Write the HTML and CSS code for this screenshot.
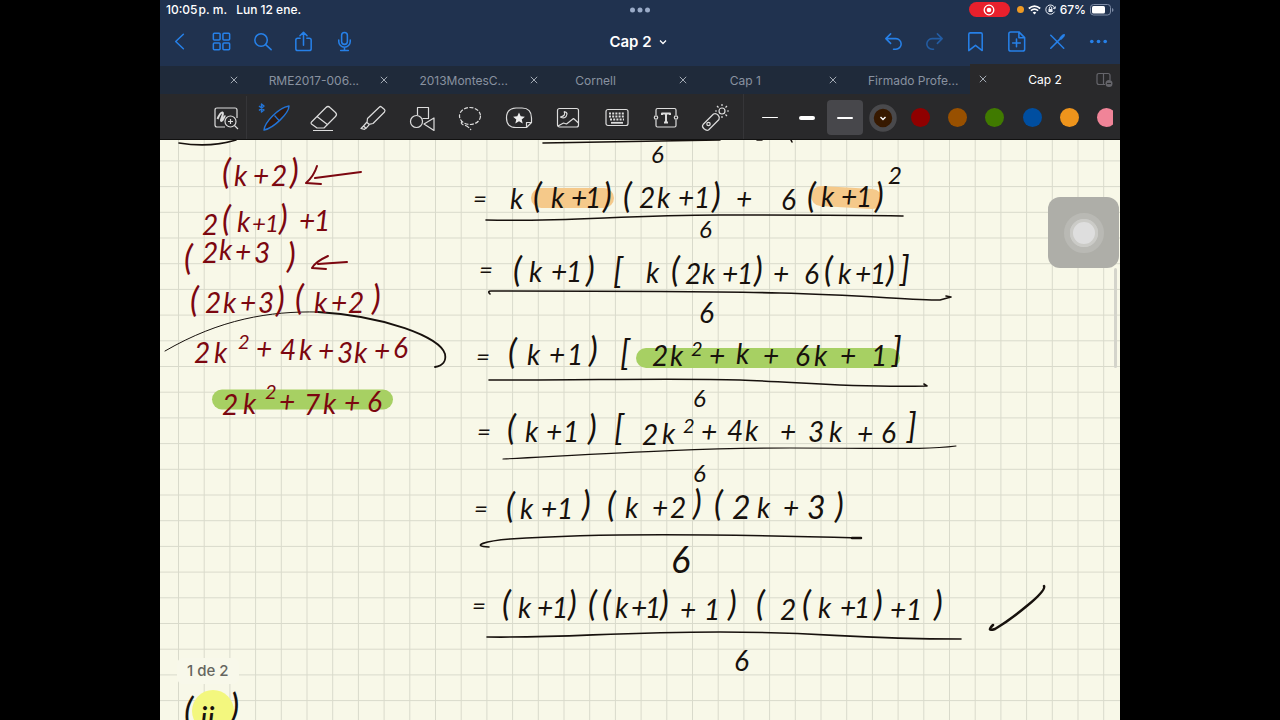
FILE: index.html
```html
<!DOCTYPE html>
<html lang="es">
<head>
<meta charset="utf-8">
<meta name="viewport" content="width=device-width, initial-scale=1">
<title>Cap 2</title>
<link rel="stylesheet" href="styles.css">
</head>
<body>
<svg width="0" height="0" class="symbols" aria-hidden="true"><symbol id="cross" viewBox="0 0 8 8"><path d="M.8.8l6.400 6.400M7.200.8L.8 7.200" fill="none" stroke="#a2a9b3" stroke-width="1"/></symbol></svg>
<div class="tablet">
  <header class="header">
    <div class="status">
      <div class="status-left"><span>10:05&#8202;p.&nbsp;m.</span><span>Lun 12 ene.</span></div>
      <svg class="dots" width="22" height="6" viewBox="0 0 22 6" aria-hidden="true"><circle cx="3.500" cy="3" r="2.500"/><circle cx="11" cy="3" r="2.500"/><circle cx="18.500" cy="3" r="2.500"/></svg>
      <div class="status-right">
        <span class="recording"><svg width="12" height="12" viewBox="0 0 12 12"><circle cx="6" cy="6" r="4.800" fill="none" stroke="#fff" stroke-width="1.300"/><circle cx="6" cy="6" r="2.300" fill="#fff"/></svg></span>
        <span class="mic-dot"></span>
        <svg width="13" height="10" viewBox="0 0 13 10" fill="none" stroke="#fff" stroke-width="1.700"><path d="M.8 3.500Q6.500-1.200 12.200 3.500M2.900 5.700Q6.500 2.700 10.100 5.700"/><path d="M4.700 7.500Q6.500 6.200 8.300 7.500L6.500 9.400Z" fill="#fff" stroke="none"/></svg>
        <svg width="11" height="11" viewBox="0 0 11 11" fill="none" stroke="#e8ecf4" stroke-width="1"><path d="M9.800 4.200A4.600 4.600 0 1 0 9.500 7.700M10.500 2.500l-.6 2.400-2-.9"/><rect x="3.500" y="5" width="4" height="3" fill="#e8ecf4" stroke="none"/><path d="M4.300 5V3.900a1.200 1.200 0 0 1 2.400 0V5"/></svg>
        <span>67%</span>
        <svg width="24" height="12" viewBox="0 0 24 12"><rect x=".5" y=".5" width="20" height="10.500" rx="3" fill="none" stroke="#7d8ba5"/><rect x="2" y="2" width="13" height="7.500" rx="1.500" fill="#fff"/><path d="M22 4v4q1.500-.6 1.500-2T22 4" fill="#7d8ba5"/></svg>
      </div>
    </div>
    <div class="nav">
      <div class="nav-group">
        <button class="nav-button" aria-label="Atrás"><svg width="24" height="24" viewBox="0 0 24 24"><path d="M15 4.500L7 12l8 7.500"/></svg></button>
        <button class="nav-button" aria-label="Miniaturas"><svg width="24" height="24" viewBox="0 0 24 24"><rect x="3.500" y="3.500" width="7" height="7" rx="1"/><rect x="13.500" y="3.500" width="7" height="7" rx="1"/><rect x="3.500" y="13.500" width="7" height="7" rx="1"/><rect x="13.500" y="13.500" width="7" height="7" rx="1"/></svg></button>
        <button class="nav-button" aria-label="Buscar"><svg width="24" height="24" viewBox="0 0 24 24"><circle cx="10.500" cy="10.500" r="6.500"/><path d="M15.300 15.300l5.700 5.200"/></svg></button>
        <button class="nav-button" aria-label="Compartir"><svg width="24" height="24" viewBox="0 0 24 24"><path d="M8.500 8.500H6q-2 0-2 2v9q0 2 2 2h12q2 0 2-2v-9q0-2-2-2h-2.500M12 16V2.500M8.300 6L12 2.300 15.700 6"/></svg></button>
        <button class="nav-button" aria-label="Grabar audio"><svg width="24" height="24" viewBox="0 0 24 24"><rect x="9" y="2.500" width="6" height="12.500" rx="3"/><path d="M6 10.500v1.500a6 6 0 0 0 12 0v-1.500M12 18v3.500M8 21.500h8"/></svg></button>
      </div>
      <button class="title">Cap 2 <svg width="8" height="6" viewBox="0 0 8 6" fill="none" stroke="#fff" stroke-width="1.300"><path d="M1 1.500l3 3 3-3"/></svg></button>
      <div class="nav-group">
        <button class="nav-button" aria-label="Deshacer"><svg width="24" height="24" viewBox="0 0 24 24"><path d="M9 4L4 9l5 5M4 9h10.500a5.300 5.300 0 0 1 0 11H12"/></svg></button>
        <button class="nav-button dim" aria-label="Rehacer" disabled><svg width="24" height="24" viewBox="0 0 24 24"><path d="M15 4l5 5-5 5M20 9H9.500a5.300 5.300 0 0 0 0 11H11"/></svg></button>
        <button class="nav-button" aria-label="Marcador"><svg width="24" height="24" viewBox="0 0 24 24"><path d="M5 4.500q0-1.500 1.500-1.500h11q1.500 0 1.500 1.500V21.500L12 16 5 21.500Z"/></svg></button>
        <button class="nav-button" aria-label="Añadir página"><svg width="24" height="24" viewBox="0 0 24 24"><path d="M14.500 2H6q-2 0-2 2v16q0 2 2 2h12.500q2 0 2-2V8ZM14.500 2v6h6M12 9.500v8M8 13.500h8"/></svg></button>
        <button class="nav-button" aria-label="Modo lectura"><svg width="24" height="24" viewBox="0 0 24 24"><path d="M5 5.500L18.500 19M5 19L14.500 9.500M16 8l3-3" /><path d="M15.500 8.500l2.500-2.500" stroke-width="3"/></svg></button>
        <button class="nav-button" aria-label="Más"><svg width="24" height="24" viewBox="0 0 24 24"><g fill="#2680e8" stroke="none"><circle cx="5" cy="12" r="1.900"/><circle cx="12" cy="12" r="1.900"/><circle cx="19" cy="12" r="1.900"/></g></svg></button>
      </div>
    </div>
    <nav class="tabs">
      <span></span>
      <div class="tab long"><button class="close" aria-label="Cerrar"><svg width="8" height="8"><use href="#cross"/></svg></button><span>RME2017-006...</span></div>
      <div class="tab long"><button class="close" aria-label="Cerrar"><svg width="8" height="8"><use href="#cross"/></svg></button><span>2013MontesC...</span></div>
      <div class="tab"><button class="close" aria-label="Cerrar"><svg width="8" height="8"><use href="#cross"/></svg></button><span>Cornell</span></div>
      <div class="tab"><button class="close" aria-label="Cerrar"><svg width="8" height="8"><use href="#cross"/></svg></button><span>Cap 1</span></div>
      <div class="tab long"><button class="close" aria-label="Cerrar"><svg width="8" height="8"><use href="#cross"/></svg></button><span>Firmado Profe...</span></div>
      <div class="tab active"><button class="close" aria-label="Cerrar"><svg width="8" height="8"><use href="#cross"/></svg></button><span>Cap 2</span>
        <button class="split" aria-label="Vista dividida"><svg width="17" height="15" viewBox="0 0 17 15" fill="none" stroke="#65656b" stroke-width="1.200"><path d="M9 12.500H3q-2 0-2-2v-7q0-2 2-2h9q2 0 2 2V8M7.500 1.500v11"/><circle cx="13" cy="11.500" r="3.500" fill="#65656b" stroke="none"/><path d="M11 11.500h4" stroke="#29292b"/></svg></button>
      </div>
    </nav>
  </header>

  <div class="toolbar">
    <div class="tools">
      <button class="tool" aria-label="Ventana de zoom"><svg width="28" height="28" viewBox="0 0 28 28"><path d="M13 23H5q-2 0-2-2V6q0-2 2-2h18q2 0 2 2v8"/><path d="M5.500 15q3-7 5-6.500c2 .5-3 8.500-1 8.500s2-5 4-5" stroke-width="2"/><circle cx="18.500" cy="17.500" r="5.500"/><path d="M22.500 21.500l3.500 3.500M16 17.500h5M18.500 15v5"/></svg></button>
      <button class="tool pen" aria-label="Pluma"><svg width="38" height="30" viewBox="0 0 38 30"><path d="M4 3l5 4-2.500 2V1L9 3 4 7.500" stroke="#2374d6" stroke-width="1.500"/><path d="M9 27C10 19 23 5 34 3 34 10 19 25 9 27Z" fill="#2c1a14" stroke="#2374d6" stroke-width="1.400"/><path d="M19.500 12.500l4.500 5" stroke="#2374d6"/></svg></button>
      <button class="tool" aria-label="Borrador"><svg width="30" height="28" viewBox="0 0 30 28"><path d="M2.500 18L17 3.500q2-2 4 0l5.500 5q2 2 0 4L15 24H8l-5.500-4q-1-1 0-2M8 12.500l11 8.500M4 26.500h20"/></svg></button>
      <button class="tool" aria-label="Resaltador"><svg width="28" height="28" viewBox="0 0 28 28"><path d="M8.500 14.500L20.500 3q1-1 2 0l3 2.500q1 1 0 2.500L14 19.500l-4 .8-2-1.800ZM8 18l-3.500 4 2.500 2.300 3.500-4M4.500 22L2 24.500l3.500.8L7 24"/></svg></button>
      <button class="tool" aria-label="Formas"><svg width="28" height="28" viewBox="0 0 28 28"><path d="M9.500 11V3.500h11v11h-6"/><circle cx="8.500" cy="17.500" r="6"/><path d="M26 14v12.500L16 20Z"/></svg></button>
      <button class="tool" aria-label="Lazo"><svg width="28" height="28" viewBox="0 0 28 28"><ellipse cx="14" cy="12" rx="10.500" ry="8.500" stroke-dasharray="4 1.500"/><path d="M6 17q-2 3 2 4t7 5" stroke-dasharray="5 1.500"/></svg></button>
      <button class="tool" aria-label="Elementos"><svg width="30" height="28" viewBox="0 0 30 28"><path d="M22.500 23.500H12q-9.500 0-9.500-9.500T12 4h6q9.500 0 9.500 10v4.500ZM22.500 23.500v-5h5"/><path d="M15 8.500l1.700 3.800 4.200.4-3.200 2.700 1 4-3.700-2.100-3.700 2.100 1-4-3.200-2.700 4.200-.4Z" fill="#eee" stroke="none"/></svg></button>
      <button class="tool" aria-label="Imagen"><svg width="28" height="28" viewBox="0 0 28 28"><rect x="3.500" y="4.500" width="21" height="18.500" rx="2"/><path d="M4 22l5.500-3 3 1 7-5.500 5 4.500M10 7.500q2.500 4-3.500 5.500 5.500 2.500 6.500-3 0-2-3-2.500"/></svg></button>
      <button class="tool" aria-label="Teclado"><svg width="28" height="28" viewBox="0 0 28 28"><rect x="3" y="5.500" width="22" height="16" rx="2"/><path d="M6 9.500h16M6 12.500h16M7 15.500h14" stroke-width="2" stroke-dasharray="2 1.200"/><path d="M8 18.800h12" stroke-width="1.800"/></svg></button>
      <button class="tool" aria-label="Texto"><svg width="28" height="28" viewBox="0 0 28 28"><path d="M4 11V6q0-1.500 1.500-1.500h17Q24 4.500 24 6v5M24 16v5.500q0 1.500-1.500 1.500h-17Q4 23 4 21.500V16"/><circle cx="4" cy="13.500" r="1.700"/><circle cx="24" cy="13.500" r="1.700"/><path d="M10 11V9.500h8V11M14 9.500v9M12 18.500h4" stroke-width="2"/></svg></button>
      <button class="tool" aria-label="Puntero láser"><svg width="30" height="30" viewBox="0 0 30 30"><path d="M3 21.500L13.500 11q2.500-1 4.500 1 2 2 1 4.500L8.500 27q-2 1-4.500-1.300T3 21.500"/><circle cx="8.500" cy="21" r="1.700"/><circle cx="22" cy="8" r="3"/><path d="M22 1v2M22 13v2M15 8h2M27 8h2M17 3l1.500 1.500M27 3l-1.500 1.500M27 13l-1.500-1.500"/></svg></button>
    </div>
    <div class="widths">
      <button class="stroke" aria-label="Trazo fino"><span class="line thin"></span></button>
      <button class="stroke" aria-label="Trazo grueso"><span class="line thick"></span></button>
      <button class="stroke selected" aria-label="Trazo medio"><span class="line"></span></button>
    </div>
    <div class="palette">
      <button class="color current" aria-label="Marrón oscuro"><svg width="28" height="28" viewBox="0 0 28 28"><circle cx="14" cy="14" r="11.500" fill="#371900" stroke="#49494c" stroke-width="4.500"/><path d="M11.500 13l2.500 2.500 2.500-2.500" fill="none" stroke="#fff" stroke-width="1.400"/></svg></button>
      <button class="color" aria-label="Rojo"><span class="swatch red"></span></button>
      <button class="color" aria-label="Marrón"><span class="swatch brown"></span></button>
      <button class="color" aria-label="Verde"><span class="swatch green"></span></button>
      <button class="color" aria-label="Azul"><span class="swatch blue"></span></button>
      <button class="color" aria-label="Naranja"><span class="swatch orange"></span></button>
      <button class="color" aria-label="Rosa"><span class="swatch pink"></span></button>
    </div>
  </div>

  <main class="canvas">
    <svg class="page" viewBox="160 140 960 580" preserveAspectRatio="xMinYMin slice">
      <defs><pattern id="grid" x="178" y="160.400" width="25.700" height="25.700" patternUnits="userSpaceOnUse"><path d="M0 .5H25.700M.5 0V25.700" stroke="#d9dacb" stroke-width="1" fill="none"/></pattern></defs>
      <rect x="160" y="140" width="960" height="580" fill="url(#grid)"/>

      <g class="highlights">
        <path d="M541 198H604" stroke="#f5c98a"/><path d="M821 196L872 199" stroke="#f5c98a"/>
        <path d="M646 358H890" stroke="#a7d063"/><path d="M222 399.500H383" stroke="#a7d063"/>
        <ellipse cx="213" cy="711" rx="21" ry="21" fill="#f3f77e"/>
      </g>

      <g class="strokes">
        <path d="M179 143Q210 148 236 140M543 143L720 140M757 140h5M791 140l1 2"/>
        <path d="M486 220C570 222 620 215 720 215S850 215 902 216M900 216h3"/>
        <path d="M490 294q-3-3 1-3C600 291 700 291 780 293S910 300 940 300L951 297M946 296l5 1"/>
        <path d="M489 380C600 380 680 378 740 380S850 388 927 386l-3-2"/>
        <path d="M503 459C600 454 690 448 790 448S925 450 956 446" stroke-width="1.200"/>
        <path d="M489 547C470 546 485 541 510 539C600 533 710 534 860 538"/><path d="M852 538h9" stroke-width="2.500"/>
        <path d="M487 637C570 638 610 632 720 632S840 639 961 639"/>
        <path d="M993 625q-7 7 2 4Q1010 620 1028 605T1044 586" stroke-width="2.500"/>
        <path d="M165 351C220 319 270 311 318 312" stroke-width="1"/><path d="M318 312C385 316 440 337 445 354Q447 365 435 367" stroke-width="1.800"/>
      </g>
      <g class="strokes arrows">
        <path d="M361 172L315 178M317 166Q314 176 306 183L321 184"/>
        <path d="M347 262L318 264M328 256Q315 262 312 268L326 269"/>
      </g>

      <g class="ink">
        <text x="651" y="163" class="small">6</text>

        <text x="473" y="207" class="small">=</text><text x="510" y="209">k</text><text x="533" y="208" class="fence">(</text><text x="551" y="208">k</text><text x="571" y="208">+</text><text x="585" y="208">1</text><text x="603" y="208" class="fence">)</text><text x="623" y="208" class="fence">(</text><text x="639" y="208">2</text><text x="657" y="208">k</text><text x="678" y="208">+</text><text x="694" y="208">1</text><text x="712" y="208" class="fence">)</text><text x="736" y="209">+</text><text x="781" y="210">6</text><text x="807" y="208" class="fence">(</text><text x="821" y="207">k</text><text x="841" y="207">+</text><text x="856" y="207">1</text><text x="875" y="208" class="fence">)</text><text x="888" y="184" class="small">2</text>
        <text x="699" y="238" class="small">6</text>

        <text x="479" y="278" class="small">=</text><text x="513" y="282" class="fence">(</text><text x="529" y="282">k</text><text x="551" y="282">+</text><text x="566" y="282">1</text><text x="586" y="282" class="fence">)</text><text x="613" y="283" class="fence">[</text><text x="646" y="283">k</text><text x="671" y="282" class="fence">(</text><text x="685" y="284">2</text><text x="702" y="284">k</text><text x="722" y="284">+</text><text x="737" y="284">1</text><text x="754" y="282" class="fence">)</text><text x="773" y="284">+</text><text x="804" y="284">6</text><text x="824" y="282" class="fence">(</text><text x="838" y="284">k</text><text x="855" y="284">+</text><text x="870" y="284">1</text><text x="886" y="282" class="fence">)</text><text x="900" y="281" class="fence">]</text>
        <text x="699" y="323">6</text>

        <text x="476" y="365" class="small">=</text><text x="508" y="364" class="fence">(</text><text x="527" y="365">k</text><text x="549" y="365">+</text><text x="567" y="365">1</text><text x="589" y="362" class="fence">)</text><text x="620" y="365" class="fence">[</text><text x="652" y="366">2</text><text x="670" y="366">k</text><text x="691" y="356" class="power">2</text><text x="709" y="366">+</text><text x="736" y="364">k</text><text x="763" y="366">+</text><text x="795" y="366">6</text><text x="814" y="366">k</text><text x="840" y="366">+</text><text x="871" y="366">1</text><text x="892" y="362" class="fence">]</text>
        <text x="693" y="407" class="small">6</text>

        <text x="477" y="440" class="small">=</text><text x="507" y="440" class="fence">(</text><text x="525" y="442">k</text><text x="546" y="442">+</text><text x="563" y="442">1</text><text x="588" y="440" class="fence">)</text><text x="614" y="440" class="fence">[</text><text x="642" y="445">2</text><text x="662" y="444">k</text><text x="683" y="433" class="power">2</text><text x="701" y="442">+</text><text x="727" y="441">4</text><text x="745" y="441">k</text><text x="780" y="442">+</text><text x="808" y="442">3</text><text x="829" y="442">k</text><text x="857" y="444">+</text><text x="881" y="443">6</text><text x="907" y="438" class="fence">]</text>
        <text x="693" y="482" class="small">6</text>

        <text x="474" y="517" class="small">=</text><text x="506" y="518" class="fence">(</text><text x="520" y="519">k</text><text x="541" y="519">+</text><text x="557" y="519">1</text><text x="582" y="516" class="fence">)</text><text x="607" y="517" class="fence">(</text><text x="625" y="518">k</text><text x="652" y="518">+</text><text x="670" y="518">2</text><text x="693" y="515" class="fence">)</text><text x="714" y="516" class="fence">(</text><text x="732" y="519" class="wide">2</text><text x="757" y="518">k</text><text x="783" y="518">+</text><text x="807" y="519" class="wide">3</text><text x="835" y="518" class="fence">)</text>
        <text x="671" y="573" class="large">6</text>

        <text x="472" y="614" class="small">=</text><text x="502" y="616" class="fence">(</text><text x="518" y="618">k</text><text x="537" y="618">+</text><text x="552" y="618">1</text><text x="568" y="616" class="fence">)</text><text x="588" y="616" class="fence">(</text><text x="602" y="616" class="fence">(</text><text x="615" y="618">k</text><text x="631" y="618">+</text><text x="645" y="618">1</text><text x="660" y="616" class="fence">)</text><text x="680" y="620">+</text><text x="704" y="620">1</text><text x="728" y="616" class="fence">)</text><text x="756" y="616" class="fence">(</text><text x="780" y="620">2</text><text x="802" y="616" class="fence">(</text><text x="818" y="618">k</text><text x="840" y="618">+</text><text x="854" y="618">1</text><text x="874" y="616" class="fence">)</text><text x="890" y="620">+</text><text x="906" y="620">1</text><text x="934" y="616" class="fence">)</text>
        <text x="734" y="671">6</text>

        <text x="184" y="724" class="large">(</text><text x="200" y="730" class="wide">ii</text><text x="230" y="720" class="large">)</text>
      </g>

      <g class="ink red-ink">
        <text x="222" y="184" class="fence">(</text><text x="234" y="186">k</text><text x="253" y="186">+</text><text x="271" y="186">2</text><text x="290" y="184" class="fence">)</text>
        <text x="202" y="235">2</text><text x="222" y="231" class="fence">(</text><text x="237" y="232">k</text><text x="252" y="232" class="small">+</text><text x="265" y="232" class="small">1</text><text x="279" y="230" class="fence">)</text><text x="299" y="231">+</text><text x="314" y="231">1</text>
        <text x="184" y="270" class="fence">(</text><text x="202" y="263">2</text><text x="219" y="260">k</text><text x="235" y="262">+</text><text x="254" y="263">3</text><text x="287" y="268" class="fence">)</text>
        <text x="190" y="312" class="fence">(</text><text x="205" y="313">2</text><text x="223" y="313">k</text><text x="240" y="313">+</text><text x="258" y="313">3</text><text x="276" y="312" class="fence">)</text><text x="295" y="310" class="fence">(</text><text x="314" y="313">k</text><text x="331" y="313">+</text><text x="348" y="313">2</text><text x="372" y="310" class="fence">)</text>
        <text x="194" y="363">2</text><text x="214" y="363">k</text><text x="238" y="349" class="power">2</text><text x="256" y="359">+</text><text x="280" y="360">4</text><text x="299" y="360">k</text><text x="318" y="361">+</text><text x="337" y="363">3</text><text x="354" y="363">k</text><text x="374" y="361">+</text><text x="393" y="358">6</text>
        <text x="222" y="415">2</text><text x="243" y="414">k</text><text x="265" y="399" class="power">2</text><text x="279" y="412">+</text><text x="304" y="415">7</text><text x="323" y="414">k</text><text x="344" y="413">+</text><text x="367" y="412">6</text>
      </g>
    </svg>
    <button class="assistive" aria-label="AssistiveTouch"><span></span></button>
    <span class="scrollbar"></span>
    <span class="page-count">1 de 2</span>
  </main>
</div>
</body>
</html>
```
FILE: styles.css
```css
* { box-sizing: border-box; }
body { margin: 0; background: #000; font-family: Inter, "Liberation Sans", sans-serif; }
button { padding: 0; border: 0; background: none; color: inherit; font: inherit; }
svg { display: block; flex: none; }
.symbols { position: absolute; }

.tablet {
  display: flex;
  flex-direction: column;
  width: min(100%, 133.334vh);
  height: 100vh;
  margin: 0 auto;
  overflow: hidden;
}

.header { background: #20324f; color: #fff; }
.status {
  display: grid;
  grid-template-columns: 1fr auto 1fr;
  align-items: center;
  height: 19px;
  padding: 0 6px;
  font-size: 12px;
  font-weight: 500;
}
.status-left { display: flex; gap: 9px; }
.status-right { display: flex; align-items: center; justify-content: flex-end; gap: 4px; }
.dots { fill: #9aabc8; }
.recording { display: flex; align-items: center; justify-content: center; width: 41px; height: 15px; border-radius: 8px; background: #e8202c; }
.mic-dot { width: 7px; height: 7px; margin-left: 3px; border-radius: 50%; background: #ee9a24; }

.nav { display: grid; grid-template-columns: 1fr auto 1fr; align-items: center; height: 45px; padding-right: 1px; }
.nav-group { display: flex; }
.nav-group:last-child { justify-content: flex-end; }
.nav-button { display: flex; align-items: center; justify-content: center; width: 41px; height: 44px; }
.nav-button svg { width: 23px; height: 23px; fill: none; stroke: #2680e8; stroke-width: 1.6; stroke-linecap: round; stroke-linejoin: round; }
.nav-button.dim svg { opacity: .55; }
.title { display: flex; align-items: center; gap: 7px; padding-right: 3px; font-size: 15px; font-weight: 600; }

.tabs { display: grid; grid-template-columns: 61fr repeat(6, 150fr); height: 30px; }
.tabs > :not(.active) { margin-top: 2px; background: #1f2a3a; }
.tab { position: relative; display: flex; align-items: center; justify-content: center; min-width: 0; color: #8992a0; font-size: 12px; white-space: nowrap; }
.tab.long { padding-left: 36px; }
.tab.active { background: #29292b; color: #fff; }
.close { position: absolute; left: 4px; display: flex; align-items: center; justify-content: center; width: 18px; height: 18px; }
.split { position: absolute; right: 7px; }

.toolbar { display: flex; flex: none; height: 46px; padding: 0 7px 0 43px; background: #29292b; border-bottom: 1px solid #111; }
.tools { display: grid; grid-template-columns: repeat(11, 1fr); flex: 537; padding: 2px 4px 0 0; margin-left: -1px; border-right: 1px solid #353538; }
.tool { display: flex; align-items: center; justify-content: center; min-width: 0; }
.tool svg { fill: none; stroke: #dcdcdc; stroke-width: 1.2; stroke-linejoin: round; stroke-linecap: butt; }
.tool.pen { justify-content: flex-start; margin-left: -5px; padding-left: 8px; border-left: 1px solid #353538; }
.widths { display: grid; grid-template-columns: repeat(3, 1fr); flex: 113; padding: 2px 0 0 7px; box-sizing: content-box; }
.stroke { display: flex; align-items: center; justify-content: center; align-self: center; height: 35px; margin: 0 1px; }
.stroke.selected { border-radius: 4px; background: #47474b; }
.line { width: 16px; height: 2px; border-radius: 2px; background: #fff; }
.line.thin { height: 1px; }
.line.thick { height: 4px; }
.palette { display: grid; grid-template-columns: repeat(7, 15%); flex: 249; padding-top: 2px; overflow: hidden; }
.color { display: flex; align-items: center; justify-content: center; }
.swatch { width: 19px; height: 19px; border-radius: 50%; }
.red { background: #900000; }
.brown { background: #985000; }
.green { background: #407a00; }
.blue { background: #004ea0; }
.orange { background: #ee941c; }
.pink { background: #f08498; }

.canvas { position: relative; flex: 1; min-height: 0; background: #f8f8e8; }
.page { width: 100%; height: 100%; }
.highlights path { fill: none; stroke-width: 20; stroke-linecap: round; }
.strokes { fill: none; stroke: #17110d; stroke-width: 1.6; stroke-linecap: round; stroke-linejoin: round; }
.strokes.arrows { stroke: #7c0710; stroke-width: 2; }
.ink { fill: #17110d; font-family: Lato, "Liberation Sans", sans-serif; font-style: italic; font-size: 28px; }
.ink .small { font-size: 24px; }
.ink .power { font-size: 20px; }
.ink .fence { font-size: 34px; }
.ink .wide { font-size: 32px; }
.ink .large { font-size: 36px; }
.red-ink { fill: #7c0710; }

.assistive { position: absolute; top: 57px; right: 1px; display: flex; align-items: center; justify-content: center; width: 71px; height: 71px; border-radius: 12px; background: #aeaea8; }
.assistive span { width: 40px; height: 40px; border: 6px solid #b9b9b4; border-radius: 50%; background: #dedede; box-shadow: inset 0 0 0 3px #cbcbc7; }
.scrollbar { position: absolute; top: 128px; right: 3px; width: 3px; height: 100px; border-radius: 2px; background: #d4d4cb; }
.page-count { position: absolute; left: 17px; bottom: 36px; padding: 3px 10px; border-radius: 6px; background: #f8f8ea; color: #666660; font-size: 15px; line-height: 20px; font-weight: 500; }
```
